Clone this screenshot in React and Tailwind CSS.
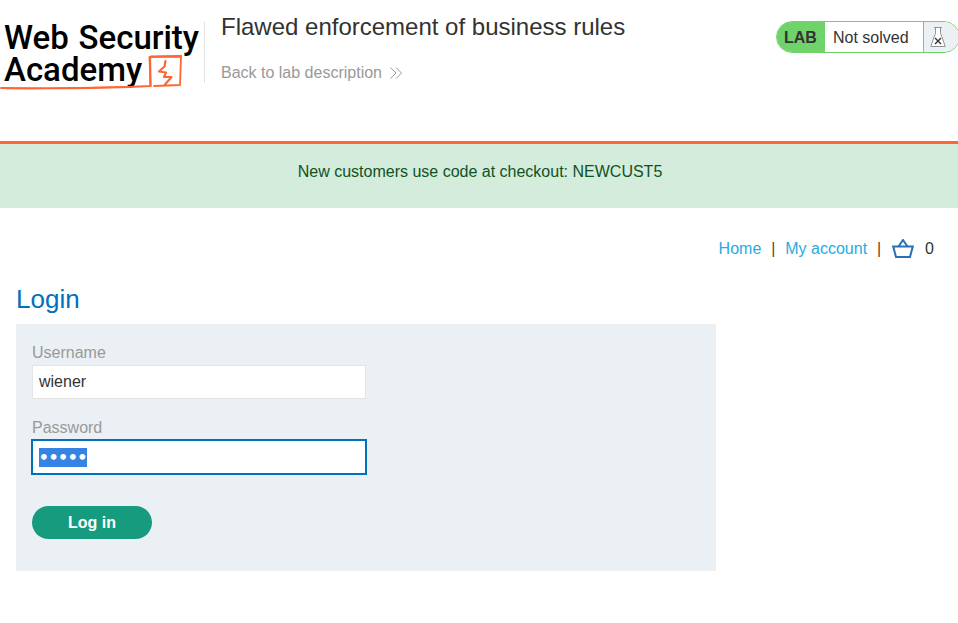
import { useEffect, useRef } from "react";

function Logo() {
  return (
    <div className="relative h-[92px] w-[204px] shrink-0 pl-1 pt-[22px] font-['Roboto','Liberation_Sans',sans-serif] text-[33px] font-medium leading-8 text-black">
      <div className="flex justify-between pr-[5px]">
        <span>Web</span>
        <span>Security</span>
      </div>
      <div>Academy</div>
      <svg
        className="absolute inset-0 h-[92px] w-[204px]"
        viewBox="0 0 204 92"
        fill="none"
        stroke="#ff6633"
        strokeLinejoin="round"
        strokeLinecap="round"
        aria-hidden="true"
      >
        <path d="M1 88C40 88.500 90 88.500 128 87L150.500 86L149.500 57L181 56.500L180 85L154 86" strokeWidth="1.8" />
        <path d="M6 88.500C50 89 80 87.500 128 87" strokeWidth="1.5" />
        <path d="M150 57.500L150.500 86M151 56.500L181 56" strokeWidth="2.2" />
        <path d="M165.500 61L164.500 66.500L159 71.500L166 72.500L164 77L171.500 77L165 84.500" strokeWidth="2.2" />
      </svg>
    </div>
  );
}

function FlaskIcon() {
  return (
    <svg className="h-[22px] w-4" viewBox="0 0 16 22" aria-hidden="true">
      <path
        d="M5.500 1.500V7.500L4 11L0.800 20.500H15.200L12 11L10.500 7.500V1.500Z"
        fill="#fff"
        stroke="#8f9496"
        strokeWidth="1"
      />
      <path d="M4 1.500H12" stroke="#8f9496" />
      <path d="M5 12L11 18M11 12L5 18" stroke="#333" strokeWidth="1.4" />
    </svg>
  );
}

function LabStatus() {
  return (
    <div className="-mr-0.5 mt-[21px] flex h-8 w-[184px] shrink-0 overflow-hidden rounded-full border border-[#70d26b] bg-white">
      <strong className="flex w-12 items-center bg-[#70d26b] pl-[7px] pt-0.5">LAB</strong>
      <span className="flex flex-1 items-center pl-2 pt-px">Not solved</span>
      <span className="flex w-9 items-center border-l border-[#70d26b] bg-[#eaf0f3] pl-[6px]">
        <FlaskIcon />
      </span>
    </div>
  );
}

function Header() {
  return (
    <header className="flex h-[144px] items-start border-b-[3px] border-[#ff6633]">
      <Logo />
      <div className="mt-[22px] h-[61px] w-px shrink-0 bg-[#e2e2e2]" />
      <div className="min-w-0 flex-1 pl-4 pt-3">
        <h1 className="text-2xl leading-[30px]">Flawed enforcement of business rules</h1>
        <a href="#lab" className="mt-[18px] inline-flex items-center gap-2 leading-[26px] text-[#999]">
          Back to lab description
          <svg className="h-3 w-3" viewBox="0 0 12 12" fill="none" stroke="currentColor" aria-hidden="true">
            <path d="M0.500 0.500L6 6L0.500 11.500M6 0.500L11.500 6L6 11.500" />
          </svg>
        </a>
      </div>
      <LabStatus />
    </header>
  );
}

function AccountNav() {
  return (
    <nav className="flex items-center justify-end pr-6 pt-[29px] leading-6">
      <a href="#home" className="text-[#29abe2]">Home</a>
      <span className="w-6 text-center text-[#6b3d12]">|</span>
      <a href="#account" className="text-[#29abe2]">My account</a>
      <span className="w-6 text-center text-[#6b3d12]">|</span>
      <a href="#cart" aria-label="Basket" className="mr-[10px]">
        <svg className="h-5 w-6" viewBox="0 0 24 20" fill="none" stroke="#286fb7" strokeWidth="2" aria-hidden="true">
          <path d="M2.200 7.500H21.800L19 18H5Z" />
          <path d="M7.500 7.500L12 1L16.500 7.500" />
        </svg>
      </a>
      <span>0</span>
    </nav>
  );
}

function LoginForm() {
  const password = useRef(null);
  useEffect(() => {
    password.current.focus();
    password.current.select();
  }, []);

  return (
    <form
      className="mt-2 h-[247px] max-w-[700px] bg-[#eaf0f3] px-4 pt-4"
      onSubmit={(event) => event.preventDefault()}
    >
      <label htmlFor="username" className="block leading-[25px] text-[#999]">Username</label>
      <input
        id="username"
        type="text"
        defaultValue="wiener"
        className="block h-[34px] w-1/2 border border-[#e4e4e4] bg-white px-[6px] outline-none"
      />
      <label htmlFor="password" className="mt-4 block leading-[25px] text-[#999]">Password</label>
      <input
        id="password"
        ref={password}
        type="password"
        defaultValue="peter"
        className="block h-[34px] w-1/2 border border-[#0071bc] bg-white px-[6px] font-['DejaVu_Sans_Mono',monospace] font-bold outline-1 outline-[#0071bc] selection:bg-[#3584e4] selection:text-white"
      />
      <button
        type="submit"
        className="mt-8 h-[33px] w-[120px] rounded-full bg-[#169b7f] font-bold text-white"
      >
        Log in
      </button>
    </form>
  );
}

export default function App() {
  return (
    <div className="min-h-screen overflow-x-hidden bg-white font-['Liberation_Sans',Arial,sans-serif] text-base text-[#333332]">
      <Header />
      <p className="h-16 bg-[#d3ecdb] pl-0.5 pt-4 text-center leading-6 text-[#10521f]">
        New customers use code at checkout: NEWCUST5
      </p>
      <AccountNav />
      <main className="px-4 pt-[22px]">
        <h2 className="pb-px text-[26px] leading-8 text-[#0071bc]">Login</h2>
        <LoginForm />
      </main>
    </div>
  );
}
